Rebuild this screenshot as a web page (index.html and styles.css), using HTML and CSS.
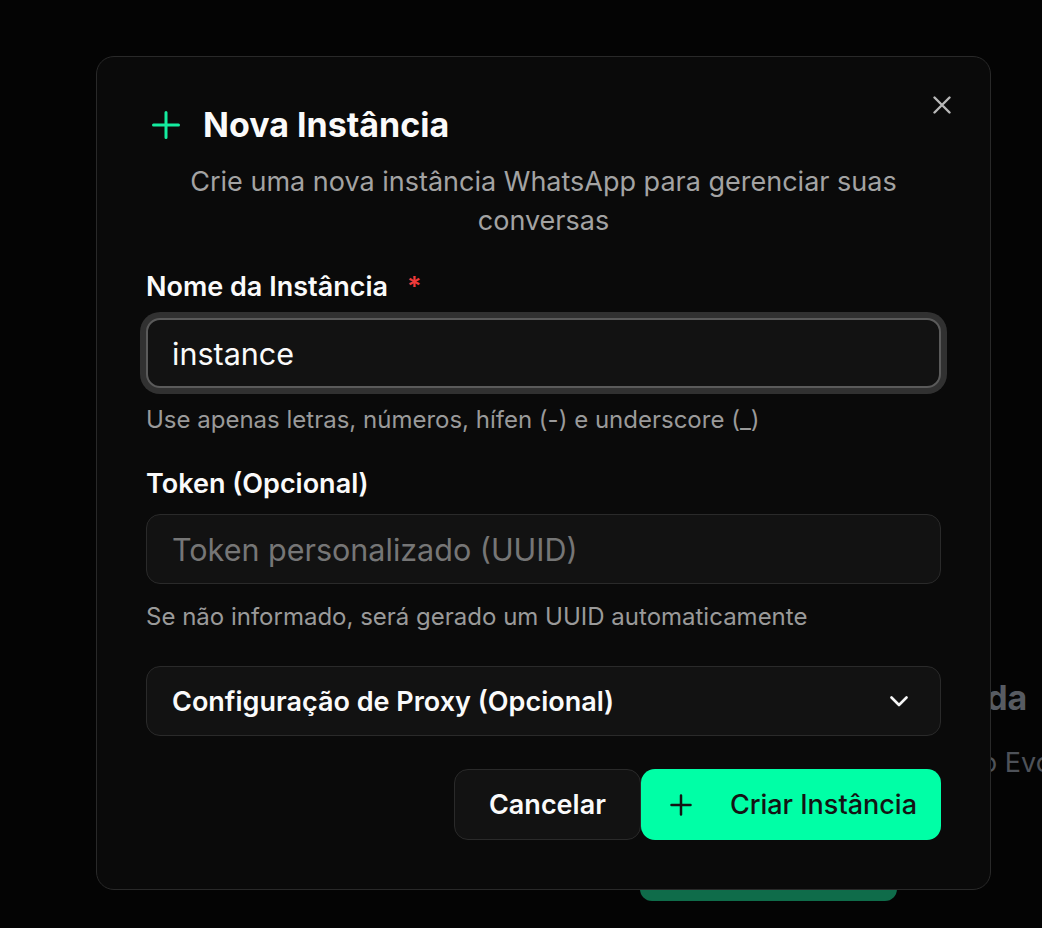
FILE: index.html
```html
<!DOCTYPE html>
<html lang="pt-BR">
<head>
<meta charset="utf-8">
<title>Nova Instância</title>
<link rel="stylesheet" href="styles.css">
</head>
<body>
<div class="app">
  <aside class="side"></aside>
  <main class="main">
    <div class="empty">
      <h2 class="empty-title">Nenhuma instância encontrada</h2>
      <p class="empty-text">Crie sua primeira instância para começar a usar o Evolution API</p>
      <div class="empty-btn">Criar Instância</div>
    </div>
  </main>
</div>

<div class="overlay">
  <div class="dialog" role="dialog">
    <button class="close" aria-label="Fechar">
      <svg width="18" height="18" viewBox="0 0 18 18"><path d="M1.5 1.5 16.5 16.5M16.5 1.5 1.5 16.5" stroke="#b8b8b8" stroke-width="2.4" stroke-linecap="round" fill="none"/></svg>
    </button>
    <div class="header">
      <svg class="title-icon" width="28" height="28" viewBox="0 0 28 28"><path d="M1.5 14h25M14 1.5v25" stroke="#14ec9f" stroke-width="3" stroke-linecap="round" fill="none"/></svg>
      <h1 class="title">Nova Instância</h1>
    </div>
    <p class="desc">Crie uma nova instância WhatsApp para gerenciar suas conversas</p>

    <div class="label label-first">Nome da Instância <span class="req">*</span></div>
    <input class="input input-focus" type="text" value="instance">
    <div class="helper">Use apenas letras, números, hífen (-) e underscore (_)</div>

    <div class="label label-second">Token (Opcional)</div>
    <input class="input input-second" type="text" placeholder="Token personalizado (UUID)">
    <div class="helper">Se não informado, será gerado um UUID automaticamente</div>

    <div class="proxy">
      <span>Configuração de Proxy (Opcional)</span>
      <svg width="18" height="11" viewBox="0 0 18 11"><path d="M1.5 1.5 9 9 16.5 1.5" stroke="#f5f5f5" stroke-width="2.6" stroke-linecap="round" stroke-linejoin="round" fill="none"/></svg>
    </div>

    <div class="actions">
      <button class="btn btn-cancel">Cancelar</button>
      <button class="btn btn-primary">
        <svg width="22" height="22" viewBox="0 0 22 22"><path d="M1.5 11h19M11 1.5v19" stroke="#141414" stroke-width="2.5" stroke-linecap="round" fill="none"/></svg>
        <span>Criar Instância</span>
      </button>
    </div>
  </div>
</div>
</body>
</html>
```

FILE: styles.css
```css
html, body {
  margin: 0;
  padding: 0;
  height: 100%;
}

body {
  background: #040404;
  font-family: Inter, "Noto Sans", sans-serif;
  color: #fafafa;
  overflow: hidden;
}

.app {
  display: flex;
  height: 928px;
}

.side {
  width: 494px;
  flex: none;
}

.main {
  flex: 1;
  min-width: 0;
  display: flex;
  justify-content: center;
  overflow: hidden;
}

.empty {
  display: flex;
  flex-direction: column;
  align-items: center;
  padding-top: 677px;
}

.empty-title {
  margin: 0;
  font-size: 34px;
  line-height: 42px;
  font-weight: 700;
  color: #575b62;
  white-space: nowrap;
}

.empty-text {
  margin: 26px 0 0;
  font-size: 27px;
  line-height: 36px;
  color: #4e5259;
  white-space: nowrap;
}

.empty-btn {
  margin-top: 60px;
  width: 257px;
  height: 60px;
  border-radius: 12px;
  background: #0f6c4a;
  color: #0f6c4a;
  flex: none;
}

.overlay {
  position: fixed;
  inset: 0;
}

.dialog {
  position: absolute;
  left: 96px;
  top: 56px;
  width: 895px;
  box-sizing: border-box;
  padding: 47px 49px 49px;
  background: #0a0a0a;
  border: 1px solid #292929;
  border-radius: 18px;
}

.close {
  position: absolute;
  top: 39px;
  right: 39px;
  width: 18px;
  height: 18px;
  padding: 0;
  border: 0;
  background: none;
  display: flex;
}

.header {
  display: flex;
  align-items: center;
  gap: 23px;
  height: 42px;
  padding-left: 6px;
}

.title-icon {
  flex: none;
}

.title {
  margin: 0;
  font-size: 34px;
  line-height: 42px;
  font-weight: 700;
  color: #fafafa;
}

.desc {
  margin: 16px 0 0;
  text-align: center;
  font-size: 27px;
  line-height: 39px;
  color: #a3a3a3;
}

.label {
  display: flex;
  gap: 19px;
  font-size: 27px;
  line-height: 36px;
  font-weight: 600;
  color: #fafafa;
}

.label-first {
  margin-top: 29px;
}

.label-second {
  margin-top: 31px;
}

.req {
  color: #ef3b3b;
}

.input {
  display: block;
  width: 100%;
  height: 70px;
  box-sizing: border-box;
  margin: 13px 0 0;
  padding: 0 25px;
  border: 1px solid #2a2a2a;
  border-radius: 14px;
  background: #121212;
  font-family: Inter, "Noto Sans", sans-serif;
  font-size: 30.5px;
  color: #fafafa;
  outline: none;
}

.input::placeholder {
  color: #767676;
}

.input-focus {
  border: 2px solid #5a5a5a;
  padding: 0 24px;
  box-shadow: 0 0 0 6px #313131;
}

.input-second {
  margin-top: 12px;
}

.helper {
  margin-top: 17px;
  font-size: 24px;
  line-height: 30px;
  color: #9a9a9a;
}

.input-second + .helper {
  margin-top: 18px;
}

.proxy {
  margin-top: 34px;
  height: 70px;
  box-sizing: border-box;
  border: 1px solid #2a2a2a;
  border-radius: 14px;
  background: #121212;
  padding: 0 32px 0 25px;
  display: flex;
  align-items: center;
  justify-content: space-between;
  font-size: 27px;
  font-weight: 600;
  color: #fafafa;
}

.actions {
  margin-top: 33px;
  display: flex;
  justify-content: flex-end;
  gap: 0;
}

.btn {
  height: 71px;
  box-sizing: border-box;
  border-radius: 14px;
  font-family: Inter, "Noto Sans", sans-serif;
  font-size: 27px;
  font-weight: 600;
  display: flex;
  align-items: center;
}

.btn-cancel {
  padding: 0 34px;
  border: 1px solid #2a2a2a;
  background: #121212;
  color: #fafafa;
}

.btn-primary {
  padding: 0 24px 0 29px;
  border: 0;
  background: #00ffa6;
  color: #141414;
  font-weight: 500;
  gap: 38px;
}
```
